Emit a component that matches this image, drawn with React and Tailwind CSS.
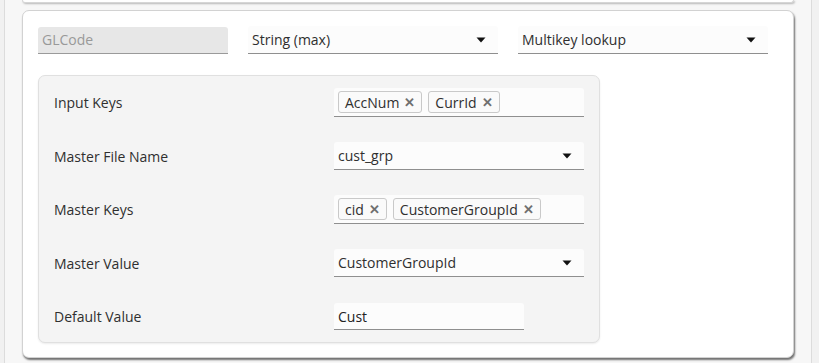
import { useState } from "react";

const font = { fontFamily: '"Open Sans", "Noto Sans", sans-serif' };

function Caret() {
    return (
        <svg width="10" height="6" viewBox="0 0 10 6" className="shrink-0">
            <path d="M0.5 0.5 L9.5 0.5 L5 5.5 Z" fill="#111" />
        </svg>
    );
}

function Select({ value, width = "w-[250px]" }) {
    return (
        <div
            className={`${width} h-[28px] flex items-center justify-between pl-[4px] pr-[12px] bg-[#fcfcfc] border-b border-[#8f8f8f] rounded-t-[3px] text-[14px] text-[#2f2f2f]`}
        >
            <span>{value}</span>
            <Caret />
        </div>
    );
}

function Chip({ label }) {
    return (
        <span className="inline-flex items-center gap-[5px] h-[22px] px-[6px] border border-[#c9c9c9] rounded-[3px] bg-[#fafafa] text-[14px] text-[#2f2f2f]">
            {label}
            <span className="text-[#6f6f6f] text-[13px] font-bold leading-none">✕</span>
        </span>
    );
}

function ChipInput({ chips }) {
    return (
        <div className="w-[250px] h-[29px] flex items-center gap-[6px] pl-[4px] bg-[#fcfcfc] border-b border-[#8f8f8f] rounded-t-[3px]">
            {chips.map((c) => (
                <Chip key={c} label={c} />
            ))}
        </div>
    );
}

function Row({ label, children }) {
    return (
        <div className="flex items-center h-[29px]">
            <div className="w-[280px] text-[14px] text-[#2f2f2f]">{label}</div>
            {children}
        </div>
    );
}

export default function App() {
    const [defaultValue, setDefaultValue] = useState("Cust");

    return (
        <div className="min-h-screen bg-[#f1f1f1] pl-[4px] pr-[7px]" style={font}>
            <div className="h-[363px] bg-[#f7f7f7] border-x border-[#dcdcdc] px-[17px]">
                <div className="h-[3px] bg-white rounded-b-[6px] border-b border-x border-[#d6d6d6] shadow-[1px_1px_2px_rgba(0,0,0,0.25)]" />

                <div className="mt-[7px] bg-white border border-[#d2d2d2] rounded-[7px] shadow-[1px_2px_2px_rgba(0,0,0,0.55)] pt-[15px] pb-[14px] px-[15px]">
                    <div className="flex items-center gap-[20px]">
                        <div className="w-[190px] h-[27px] flex items-center pl-[4px] bg-[#e7e7e7] border-b border-[#9a9a9a] rounded-t-[3px] text-[14px] text-[#999]">
                            GLCode
                        </div>
                        <Select value="String (max)" />
                        <Select value="Multikey lookup" />
                    </div>

                    <div className="mt-[21px] w-[562px] bg-[#f4f4f4] border border-[#e0e0e0] rounded-[7px] shadow-[0_1px_2px_rgba(0,0,0,0.08)] pt-[12px] pb-[11px] pl-[15px] pr-[15px] flex flex-col gap-[24.5px]">
                        <Row label="Input Keys">
                            <ChipInput chips={["AccNum", "CurrId"]} />
                        </Row>
                        <Row label="Master File Name">
                            <Select value="cust_grp" />
                        </Row>
                        <Row label="Master Keys">
                            <ChipInput chips={["cid", "CustomerGroupId"]} />
                        </Row>
                        <Row label="Master Value">
                            <Select value="CustomerGroupId" />
                        </Row>
                        <Row label="Default Value">
                            <input
                                value={defaultValue}
                                onChange={(e) => setDefaultValue(e.target.value)}
                                className="w-[190px] h-[27px] pl-[4px] bg-[#fcfcfc] border-b border-[#8f8f8f] rounded-t-[3px] text-[14px] text-[#222] outline-none"
                                style={font}
                            />
                        </Row>
                    </div>
                </div>
            </div>
        </div>
    );
}
